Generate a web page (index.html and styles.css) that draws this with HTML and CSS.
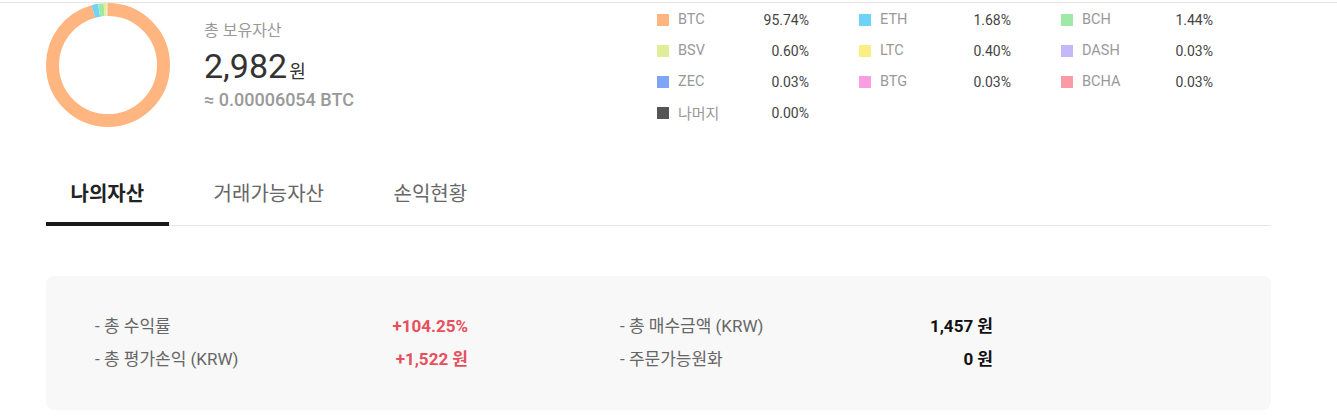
FILE: index.html
```html
<!DOCTYPE html>
<html lang="ko">
<head>
<meta charset="utf-8">
<link rel="stylesheet" href="styles.css">
</head>
<body>
<div class="page">
  <div class="wrap">
    <section class="summary">
      <svg class="donut" width="124" height="124" viewBox="0 0 124 124">
        <g transform="rotate(-90 62 62)" fill="none" stroke-width="13">
          <circle cx="62" cy="62" r="55.5" pathLength="100" stroke="#ffb57f" stroke-dasharray="95.74 4.26" stroke-dashoffset="0"/>
          <circle cx="62" cy="62" r="55.5" pathLength="100" stroke="#6fd3f7" stroke-dasharray="1.68 98.32" stroke-dashoffset="-95.74"/>
          <circle cx="62" cy="62" r="55.5" pathLength="100" stroke="#9ee8a8" stroke-dasharray="1.44 98.56" stroke-dashoffset="-97.42"/>
          <circle cx="62" cy="62" r="55.5" pathLength="100" stroke="#e0ee9a" stroke-dasharray="0.60 99.4" stroke-dashoffset="-98.86"/>
          <circle cx="62" cy="62" r="55.5" pathLength="100" stroke="#fcee84" stroke-dasharray="0.40 99.6" stroke-dashoffset="-99.46"/>
          <circle cx="62" cy="62" r="55.5" pathLength="100" stroke="#c4b8f8" stroke-dasharray="0.03 99.97" stroke-dashoffset="-99.86"/>
          <circle cx="62" cy="62" r="55.5" pathLength="100" stroke="#7fa6f5" stroke-dasharray="0.03 99.97" stroke-dashoffset="-99.89"/>
          <circle cx="62" cy="62" r="55.5" pathLength="100" stroke="#f99ee0" stroke-dasharray="0.03 99.97" stroke-dashoffset="-99.92"/>
          <circle cx="62" cy="62" r="55.5" pathLength="100" stroke="#f99ba5" stroke-dasharray="0.03 99.97" stroke-dashoffset="-99.95"/>
        </g>
      </svg>
      <div class="info">
        <div class="info-label">총 보유자산</div>
        <div class="info-amount"><span class="num">2,982</span><span class="unit">원</span></div>
        <div class="info-btc">≈ 0.00006054 BTC</div>
      </div>
      <div class="legend">
        <div class="item"><span class="sw c-btc"></span><span class="name">BTC</span><span class="pct">95.74%</span></div>
        <div class="item"><span class="sw c-eth"></span><span class="name">ETH</span><span class="pct">1.68%</span></div>
        <div class="item"><span class="sw c-bch"></span><span class="name">BCH</span><span class="pct">1.44%</span></div>
        <div class="item"><span class="sw c-bsv"></span><span class="name">BSV</span><span class="pct">0.60%</span></div>
        <div class="item"><span class="sw c-ltc"></span><span class="name">LTC</span><span class="pct">0.40%</span></div>
        <div class="item"><span class="sw c-dash"></span><span class="name">DASH</span><span class="pct">0.03%</span></div>
        <div class="item"><span class="sw c-zec"></span><span class="name">ZEC</span><span class="pct">0.03%</span></div>
        <div class="item"><span class="sw c-btg"></span><span class="name">BTG</span><span class="pct">0.03%</span></div>
        <div class="item"><span class="sw c-bcha"></span><span class="name">BCHA</span><span class="pct">0.03%</span></div>
        <div class="item"><span class="sw c-rest"></span><span class="name ko">나머지</span><span class="pct">0.00%</span></div>
      </div>
    </section>

    <nav class="tabs">
      <div class="tab active">나의자산</div>
      <div class="tab">거래가능자산</div>
      <div class="tab">손익현황</div>
    </nav>

    <section class="stats">
      <div class="col">
        <div class="row"><span class="label">- 총 수익률</span><span class="val red">+104.25%</span></div>
        <div class="row"><span class="label">- 총 평가손익 (KRW)</span><span class="val red">+1,522 원</span></div>
      </div>
      <div class="col">
        <div class="row"><span class="label">- 총 매수금액 (KRW)</span><span class="val">1,457 원</span></div>
        <div class="row"><span class="label">- 주문가능원화</span><span class="val">0 원</span></div>
      </div>
    </section>
  </div>
</div>
</body>
</html>
```

FILE: styles.css
```css
* { box-sizing: border-box; }
html, body { margin: 0; padding: 0; background: #fff; }
body {
  font-family: Roboto, "Noto Sans CJK KR", sans-serif;
  color: #333;
  padding-top: 2px;
}
.page {
  border-top: 1px solid #e6e6e6;
}
.wrap {
  margin-left: 46px;
  width: 1225px;
}
.summary {
  display: flex;
  align-items: flex-start;
  height: 124px;
}
.donut {
  flex: 0 0 124px;
  display: block;
}
.info {
  flex: 0 0 487px;
  padding-left: 34px;
  padding-top: 18px;
}
.info-label {
  font-size: 16px;
  line-height: 20px;
  color: #999;
}
.info-amount {
  margin-top: 4px;
  line-height: 42px;
  height: 42px;
  color: #333;
}
.info-amount .num {
  font-size: 34px;
}
.info-amount .unit {
  font-size: 18px;
  margin-left: 2px;
}
.info-btc {
  margin-top: 2px;
  font-size: 18px;
  line-height: 22px;
  font-weight: 500;
  color: #999;
}
.legend {
  display: grid;
  grid-template-columns: repeat(3, 152px);
  column-gap: 50px;
  grid-auto-rows: 31px;
  padding-top: 1px;
}
.item {
  display: flex;
  align-items: center;
  font-size: 14.5px;
}
.sw {
  width: 12px;
  height: 12px;
  margin-right: 9px;
  flex: 0 0 12px;
}
.name { flex: 1; color: #999; }
.name.ko { font-size: 15px; }
.pct { color: #444; font-size: 14px; }
.c-btc { background: #ffb57f; }
.c-eth { background: #6fd3f7; }
.c-bch { background: #9ee8a8; }
.c-bsv { background: #e0ee9a; }
.c-ltc { background: #fcee84; }
.c-dash { background: #c4b8f8; }
.c-zec { background: #7fa6f5; }
.c-btg { background: #f99ee0; }
.c-bcha { background: #f99ba5; }
.c-rest { background: #555; }

.tabs {
  display: flex;
  gap: 20.5px;
  margin-top: 33px;
  border-bottom: 1px solid #e6e6e6;
}
.tab {
  position: relative;
  padding: 4px 24.5px 0;
  height: 65px;
  line-height: 61px;
  font-size: 20px;
  color: #666;
}
.tab.active {
  color: #222;
  font-weight: 700;
}
.tab.active::after {
  content: "";
  position: absolute;
  left: 0;
  right: 0;
  bottom: -1px;
  height: 4px;
  background: #1a1a1a;
}
.stats {
  margin-top: 50px;
  background: #f8f8f8;
  border-radius: 8px;
  height: 134px;
  padding: 34px 0 0 49px;
  display: grid;
  grid-template-columns: 373px 373px;
  column-gap: 152px;
  align-content: start;
}
.row {
  display: flex;
  justify-content: space-between;
  height: 33px;
  line-height: 33px;
  font-size: 17px;
}
.label { color: #666; }
.val { font-weight: 700; color: #111; }
.val.red { color: #e6505c; }
```
